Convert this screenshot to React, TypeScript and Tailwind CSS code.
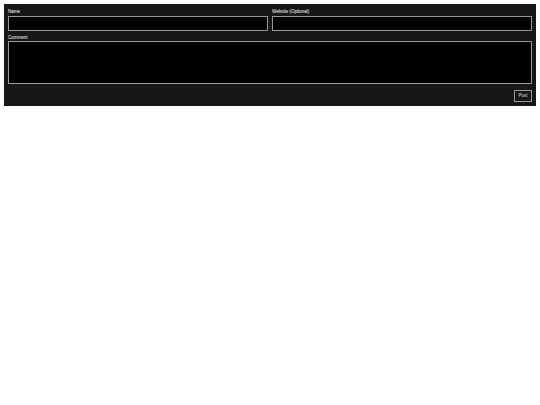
export default function App() {
  return (
    <div className="min-h-[405px] bg-white p-1 font-['Liberation_Sans',sans-serif]">
      <form className="flex h-[102px] flex-col bg-[#171717] px-1 pt-1 text-[4.5px] leading-[8px] text-white">
        <div className="flex gap-1">
          <label className="flex-1">
            <span className="block h-[8px]">Name</span>
            <input className="block h-[15px] w-full border border-[#999] bg-black" />
          </label>
          <label className="flex-1">
            <span className="block h-[8px]">Website (Optional)</span>
            <input className="block h-[15px] w-full border border-[#999] bg-black" />
          </label>
        </div>
        <label className="mt-[3px] block">
          <span className="block h-[7px]">Comment</span>
          <textarea className="block h-[43px] w-full resize-none border border-[#999] bg-black" />
        </label>
        <div className="mt-[6px] flex justify-end">
          <button type="button" className="h-[12px] w-[18px] border border-[#999] text-[4.5px] text-[#ddd]">
            Post
          </button>
        </div>
      </form>
    </div>
  );
}
